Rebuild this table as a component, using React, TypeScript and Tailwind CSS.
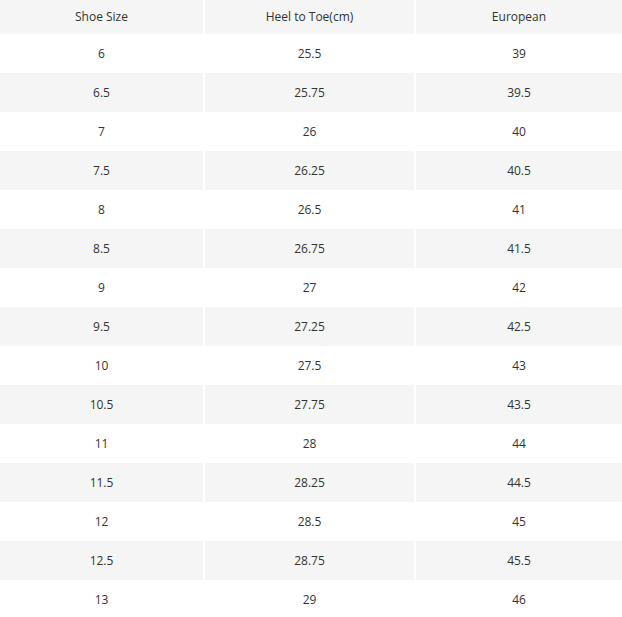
import React from "react";

const rows: [string, string, string][] = [
  ["6", "25.5", "39"],
  ["6.5", "25.75", "39.5"],
  ["7", "26", "40"],
  ["7.5", "26.25", "40.5"],
  ["8", "26.5", "41"],
  ["8.5", "26.75", "41.5"],
  ["9", "27", "42"],
  ["9.5", "27.25", "42.5"],
  ["10", "27.5", "43"],
  ["10.5", "27.75", "43.5"],
  ["11", "28", "44"],
  ["11.5", "28.25", "44.5"],
  ["12", "28.5", "45"],
  ["12.5", "28.75", "45.5"],
  ["13", "29", "46"],
];

function Row({ cells, grey, h }: { cells: string[]; grey: boolean; h: string }) {
  return (
    <div className={`grid grid-cols-[203px_209px_1fr] gap-x-[2px] bg-white ${h}`}>
      {cells.map((c, i) => (
        <div
          key={i}
          className={`flex items-center justify-center ${grey ? "bg-[#f5f5f5]" : "bg-white"}`}
        >
          {c}
        </div>
      ))}
    </div>
  );
}

export default function App() {
  return (
    <div
      className="w-[622px] h-[617px] overflow-hidden bg-white text-[12px] text-[#333333]"
      style={{ fontFamily: '"Open Sans", "Noto Sans", sans-serif' }}
    >
      <Row cells={["Shoe Size", "Heel to Toe(cm)", "European"]} grey h="h-[34px]" />
      {rows.map((r, i) => (
        <Row key={i} cells={r} grey={i % 2 === 1} h="h-[39px]" />
      ))}
    </div>
  );
}
